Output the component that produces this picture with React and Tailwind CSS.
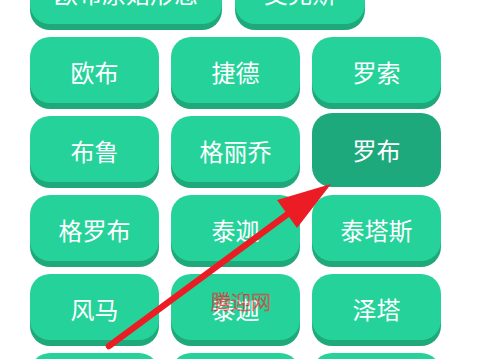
import React from 'react';

const rows = [
  ['欧布', '捷德', '罗索'],
  ['布鲁', '格丽乔', '罗布'],
  ['格罗布', '泰迦', '泰塔斯'],
  ['风马', '泰迦', '泽塔'],
  ['特利迦', '德凯', '布莱泽'],
];

const Tag = ({ label, width = 'w-[129px]', active = false }) => {
  if (active) {
    return (
      <div
        className={`${width} h-[74px] -mt-[3px] rounded-[20px] bg-[#1ea97d] flex items-center justify-center text-white text-[24px]`}
      >
        {label}
      </div>
    );
  }
  return (
    <div
      className={`${width} h-[66px] rounded-[20px] bg-[#25d39a] shadow-[0_6px_0_#1fa97b] flex items-center justify-center text-white text-[24px] pt-[3px]`}
    >
      {label}
    </div>
  );
};

export default function App() {
  return (
    <div
      className="relative w-[484px] h-[359px] overflow-hidden bg-white"
      style={{ fontFamily: '"Noto Sans CJK SC", "Noto Sans", sans-serif' }}
    >
      <div className="flex flex-col gap-[13px] pl-[30px] -mt-[42px]">
        <div className="flex gap-[13px]">
          <Tag label="欧布原始形态" width="w-[192px]" />
          <Tag label="艾克斯" width="w-[130px]" />
        </div>
        {rows.map((row, i) => (
          <div key={i} className="flex gap-[12px] h-[66px] items-start">
            {row.map((label, j) => (
              <Tag key={j} label={label} active={i === 1 && j === 2} />
            ))}
          </div>
        ))}
      </div>

      {/* watermark */}
      <div className="absolute z-10 left-[211px] top-[292px] text-[20px] leading-none font-light text-transparent [-webkit-text-stroke:0.5px_#e8232b]">
        腾迎网
      </div>

      {/* red arrow */}
      <svg className="absolute inset-0" width="484" height="359" viewBox="0 0 484 359">
        <line x1="109" y1="346" x2="300" y2="205" stroke="#ec1c24" strokeWidth="6.5" strokeLinecap="round" />
        <polygon points="331,184 277,200 297,228" fill="#ec1c24" />
      </svg>
    </div>
  );
}
